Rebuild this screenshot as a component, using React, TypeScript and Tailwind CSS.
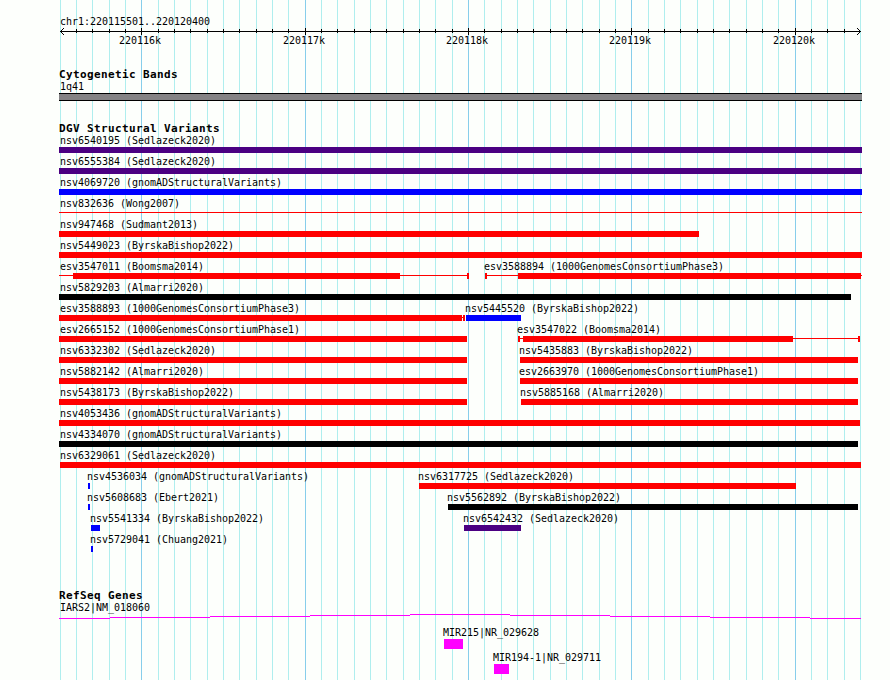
type Color = "red" | "blue" | "black" | "purple" | "magenta";

// [start, end] in track pixels
type Span = [number, number];

interface Feature {
  label: string;
  labelX: number;
  color: Color;
  blocks: Span[];
  lines?: Span[];
}

const FILL: Record<Color, string> = {
  red: "bg-[#ff0000]",
  blue: "bg-[#0000ff]",
  black: "bg-black",
  purple: "bg-[#4b0082]",
  magenta: "bg-[#ff00ff]",
};

const GRID_START = 60;
const GRID_STEP = 16.34;
const GRID = Array.from({ length: 50 }, (_, i) => ({
  x: Math.floor(GRID_START + i * GRID_STEP),
  major: i % 10 === 5,
}));

const TICK_LABELS = ["220116k", "220117k", "220118k", "220119k", "220120k"];

const VARIANT_ROWS: Feature[][] = [
  [{ label: "nsv6540195 (Sedlazeck2020)", labelX: 60, color: "purple", blocks: [[59, 862]] }],
  [{ label: "nsv6555384 (Sedlazeck2020)", labelX: 60, color: "purple", blocks: [[59, 862]] }],
  [{ label: "nsv4069720 (gnomADStructuralVariants)", labelX: 60, color: "blue", blocks: [[59, 862]] }],
  [{ label: "nsv832636 (Wong2007)", labelX: 60, color: "red", blocks: [], lines: [[59, 862]] }],
  [{ label: "nsv947468 (Sudmant2013)", labelX: 60, color: "red", blocks: [[59, 699]] }],
  [{ label: "nsv5449023 (ByrskaBishop2022)", labelX: 60, color: "red", blocks: [[59, 862]] }],
  [
    { label: "esv3547011 (Boomsma2014)", labelX: 60, color: "red", blocks: [[73, 400], [467, 469]], lines: [[59, 73], [400, 467]] },
    { label: "esv3588894 (1000GenomesConsortiumPhase3)", labelX: 484, color: "red", blocks: [[485, 487], [518, 861]], lines: [[487, 518], [861, 862]] },
  ],
  [{ label: "nsv5829203 (Almarri2020)", labelX: 60, color: "black", blocks: [[59, 851]] }],
  [
    { label: "esv3588893 (1000GenomesConsortiumPhase3)", labelX: 60, color: "red", blocks: [[59, 462], [463, 465]], lines: [[462, 463]] },
    { label: "nsv5445520 (ByrskaBishop2022)", labelX: 465, color: "blue", blocks: [[466, 521]] },
  ],
  [
    { label: "esv2665152 (1000GenomesConsortiumPhase1)", labelX: 60, color: "red", blocks: [[59, 467]] },
    { label: "esv3547022 (Boomsma2014)", labelX: 517, color: "red", blocks: [[518, 520], [523, 793], [858, 860]], lines: [[520, 523], [793, 858]] },
  ],
  [
    { label: "nsv6332302 (Sedlazeck2020)", labelX: 60, color: "red", blocks: [[59, 467]] },
    { label: "nsv5435883 (ByrskaBishop2022)", labelX: 519, color: "red", blocks: [[520, 858]] },
  ],
  [
    { label: "nsv5882142 (Almarri2020)", labelX: 60, color: "red", blocks: [[59, 467]] },
    { label: "esv2663970 (1000GenomesConsortiumPhase1)", labelX: 519, color: "red", blocks: [[520, 858]] },
  ],
  [
    { label: "nsv5438173 (ByrskaBishop2022)", labelX: 60, color: "red", blocks: [[59, 467]] },
    { label: "nsv5885168 (Almarri2020)", labelX: 520, color: "red", blocks: [[521, 858]] },
  ],
  [{ label: "nsv4053436 (gnomADStructuralVariants)", labelX: 60, color: "red", blocks: [[59, 860]] }],
  [{ label: "nsv4334070 (gnomADStructuralVariants)", labelX: 60, color: "black", blocks: [[59, 858]] }],
  [{ label: "nsv6329061 (Sedlazeck2020)", labelX: 60, color: "red", blocks: [[60, 861]] }],
  [
    { label: "nsv4536034 (gnomADStructuralVariants)", labelX: 87, color: "blue", blocks: [[88, 90]] },
    { label: "nsv6317725 (Sedlazeck2020)", labelX: 418, color: "red", blocks: [[419, 796]] },
  ],
  [
    { label: "nsv5608683 (Ebert2021)", labelX: 87, color: "blue", blocks: [[88, 90]] },
    { label: "nsv5562892 (ByrskaBishop2022)", labelX: 447, color: "black", blocks: [[448, 858]] },
  ],
  [
    { label: "nsv5541334 (ByrskaBishop2022)", labelX: 90, color: "blue", blocks: [[91, 100]] },
    { label: "nsv6542432 (Sedlazeck2020)", labelX: 463, color: "purple", blocks: [[464, 521]] },
  ],
  [{ label: "nsv5729041 (Chuang2021)", labelX: 90, color: "blue", blocks: [[91, 93]] }],
];

const GENES: Feature[] = [
  { label: "MIR215|NR_029628", labelX: 443, color: "magenta", blocks: [[444, 463]] },
  { label: "MIR194-1|NR_029711", labelX: 493, color: "magenta", blocks: [[494, 509]] },
];

// IARS2 intron hat: one pixel step per segment, [x, width, y]
const INTRON = [
  [59, 51, 4],
  [110, 100, 3],
  [210, 100, 2],
  [310, 100, 1],
  [410, 100, 0],
  [510, 100, 1],
  [610, 100, 2],
  [710, 100, 3],
  [810, 51, 4],
];

function GridLines() {
  return (
    <svg className="absolute inset-0" width="890" height="680" shapeRendering="crispEdges">
      {GRID.map(({ x, major }) => (
        <rect key={x} x={x} y={0} width={1} height={680} fill={major ? "#87ceeb" : "#afeeee"} />
      ))}
    </svg>
  );
}

function Axis() {
  return (
    <svg className="block" width="890" height="7" shapeRendering="crispEdges">
      <rect x={60} y={3} width={801} height={1} />
      {GRID.slice(1, -1).map(({ x, major }) => (
        <rect key={x} x={x} y={major ? 0 : 1} width={1} height={major ? 7 : 4} />
      ))}
      {[1, 2, 3].map((d) => (
        <g key={d}>
          <rect x={60 + d} y={3 - d} width={1} height={1} />
          <rect x={60 + d} y={3 + d} width={1} height={1} />
          <rect x={860 - d} y={3 - d} width={1} height={1} />
          <rect x={860 - d} y={3 + d} width={1} height={1} />
        </g>
      ))}
    </svg>
  );
}

function TrackTitle({ children }: { children: string }) {
  return (
    <h2 className="h-3 pl-[59px] text-[11px] leading-3 font-bold tracking-[0.378px] whitespace-pre">
      {children}
    </h2>
  );
}

function VariantRow({ features }: { features: Feature[] }) {
  return (
    <div className="relative h-[21px]">
      {features.map((f) => (
        <div key={f.label}>
          <span className="absolute top-0 whitespace-pre" style={{ left: f.labelX }}>
            {f.label}
          </span>
          {f.lines?.map(([a, b]) => (
            <div key={a} className={`absolute top-[14px] h-px ${FILL[f.color]}`} style={{ left: a, width: b - a }} />
          ))}
          {f.blocks.map(([a, b]) => (
            <div key={a} className={`absolute top-3 h-1.5 ${FILL[f.color]}`} style={{ left: a, width: b - a }} />
          ))}
        </div>
      ))}
    </div>
  );
}

function GeneRow({ gene }: { gene: Feature }) {
  const [start, end] = gene.blocks[0];
  return (
    <div className="h-[25px]">
      <div className="h-3 whitespace-pre" style={{ paddingLeft: gene.labelX }}>
        {gene.label}
      </div>
      <div className={`h-2.5 ${FILL[gene.color]}`} style={{ marginLeft: start, width: end - start }} />
    </div>
  );
}

export default function App() {
  return (
    <main className="relative h-[680px] w-[890px] overflow-hidden bg-[#fdfffc] font-['DejaVu_Sans_Mono',monospace] text-[10px] leading-3 tracking-[-0.0205px] text-black">
      <GridLines />
      <div className="relative flex flex-col">
        <header className="h-[69px] pt-4">
          <div className="h-3 pl-[60px]">chr1:220115501..220120400</div>
          <Axis />
          <div className="relative h-3">
            {TICK_LABELS.map((label, i) => (
              <span key={label} className="absolute top-0" style={{ left: GRID[5 + i * 10].x - 22 }}>
                {label}
              </span>
            ))}
          </div>
        </header>

        <section className="h-[54px]">
          <TrackTitle>Cytogenetic Bands</TrackTitle>
          <div className="h-3 pl-[60px]">1q41</div>
          <div className="ml-[59px] h-2 w-[803px] border-y border-black bg-[#848284]" />
        </section>

        <section className="h-[467px]">
          <TrackTitle>DGV Structural Variants</TrackTitle>
          {VARIANT_ROWS.map((features) => (
            <VariantRow key={features[0].label} features={features} />
          ))}
        </section>

        <section>
          <TrackTitle>RefSeq Genes</TrackTitle>
          <div className="h-3 pl-[60px]">IARS2|NM_018060</div>
          <svg className="mb-2 block" width="890" height="5" shapeRendering="crispEdges">
            {INTRON.map(([x, width, y]) => (
              <rect key={x} x={x} y={y} width={width} height={1} fill="#ff00ff" />
            ))}
          </svg>
          {GENES.map((gene) => (
            <GeneRow key={gene.label} gene={gene} />
          ))}
        </section>
      </div>
    </main>
  );
}
